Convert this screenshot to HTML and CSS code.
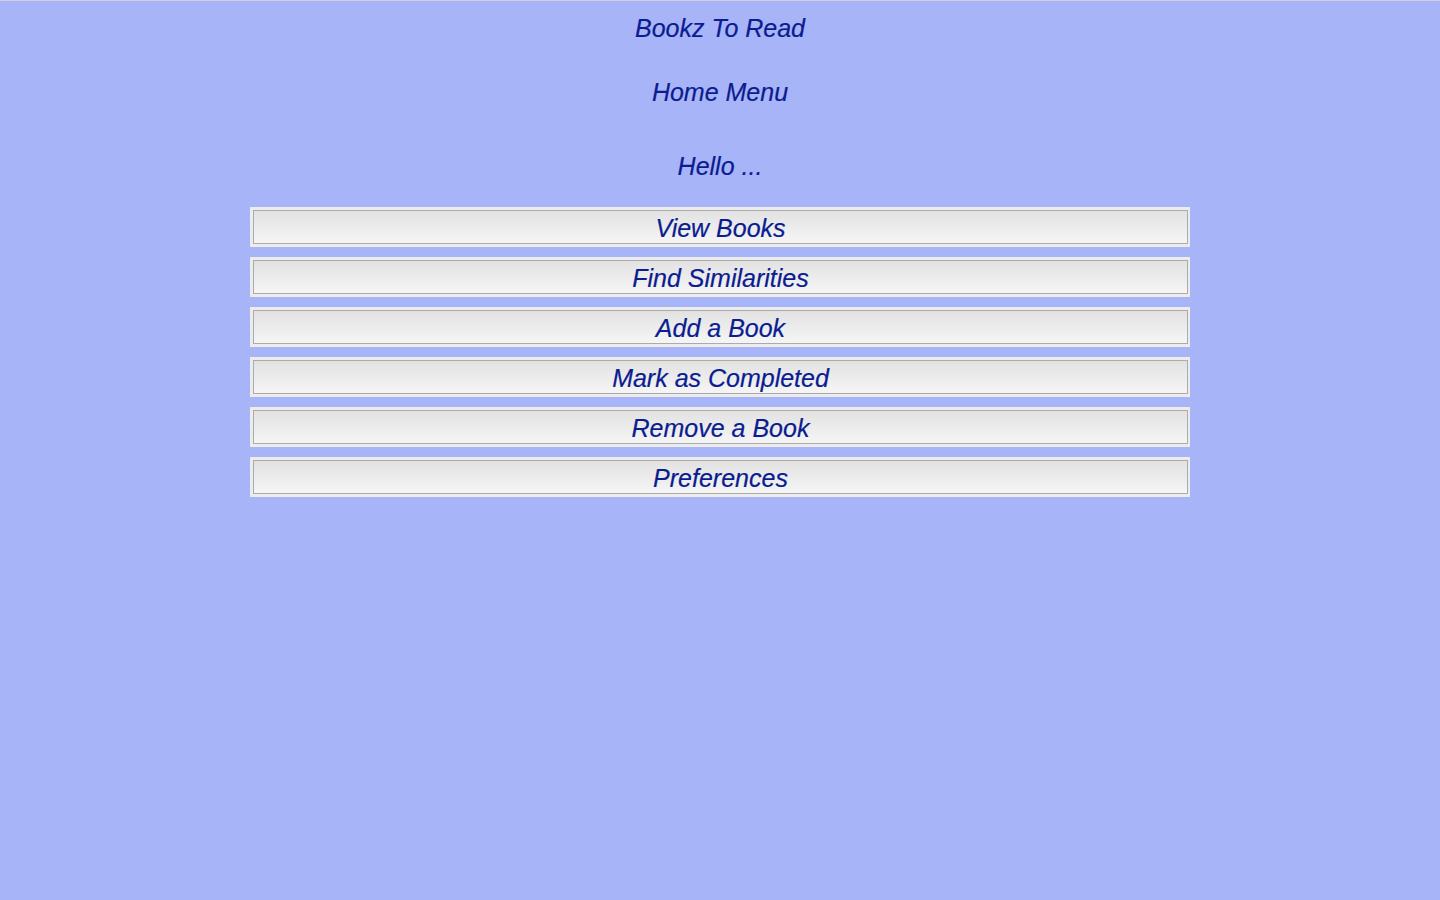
FILE: index.html
```html
<!DOCTYPE html>
<html>
<head>
<meta charset="utf-8">
<title>Bookz To Read</title>
<link rel="stylesheet" href="styles.css">
</head>
<body>
<div class="page">
  <h1 class="title">Bookz To Read</h1>
  <h2 class="subtitle">Home Menu</h2>
  <p class="hello">Hello ...</p>
  <nav class="menu">
    <button class="menu-btn"><span class="menu-inner">View Books</span></button>
    <button class="menu-btn"><span class="menu-inner">Find Similarities</span></button>
    <button class="menu-btn"><span class="menu-inner">Add a Book</span></button>
    <button class="menu-btn"><span class="menu-inner">Mark as Completed</span></button>
    <button class="menu-btn"><span class="menu-inner">Remove a Book</span></button>
    <button class="menu-btn"><span class="menu-inner">Preferences</span></button>
  </nav>
</div>
</body>
</html>
```
FILE: styles.css
```css
html, body {
  margin: 0;
  padding: 0;
  height: 100%;
}
body {
  background: #a8b4f8;
  border-top: 1px solid #cfd0da;
  box-sizing: border-box;
  font-family: "Liberation Sans", Arial, sans-serif;
  font-style: italic;
  color: #0b1c90;
}
.page {
  display: flex;
  flex-direction: column;
  align-items: center;
}
.title, .subtitle, .hello {
  margin: 0;
  font-size: 25px;
  font-weight: normal;
  line-height: 28px;
  height: 28px;
  text-align: center;
  -webkit-text-stroke: 0.2px #0b1c90;
}
.title { margin-top: 13px; }
.subtitle { margin-top: 36px; }
.hello { margin-top: 46px; }
.menu {
  margin-top: 27px;
  width: 940px;
  display: flex;
  flex-direction: column;
  gap: 10px;
}
.menu-btn {
  display: block;
  width: 100%;
  height: 40px;
  margin: 0;
  padding: 3px 2px 3px 3px;
  border: none;
  background: #ececec;
  font: inherit;
  color: inherit;
  cursor: pointer;
}
.menu-inner {
  display: flex;
  align-items: center;
  justify-content: center;
  height: 100%;
  box-sizing: border-box;
  border: 1px solid #ababab;
  background: linear-gradient(to bottom, #e2e2e2, #f5f5f5);
  font-size: 25px;
  padding-top: 2px;
  -webkit-text-stroke: 0.2px #0b1c90;
}
```
